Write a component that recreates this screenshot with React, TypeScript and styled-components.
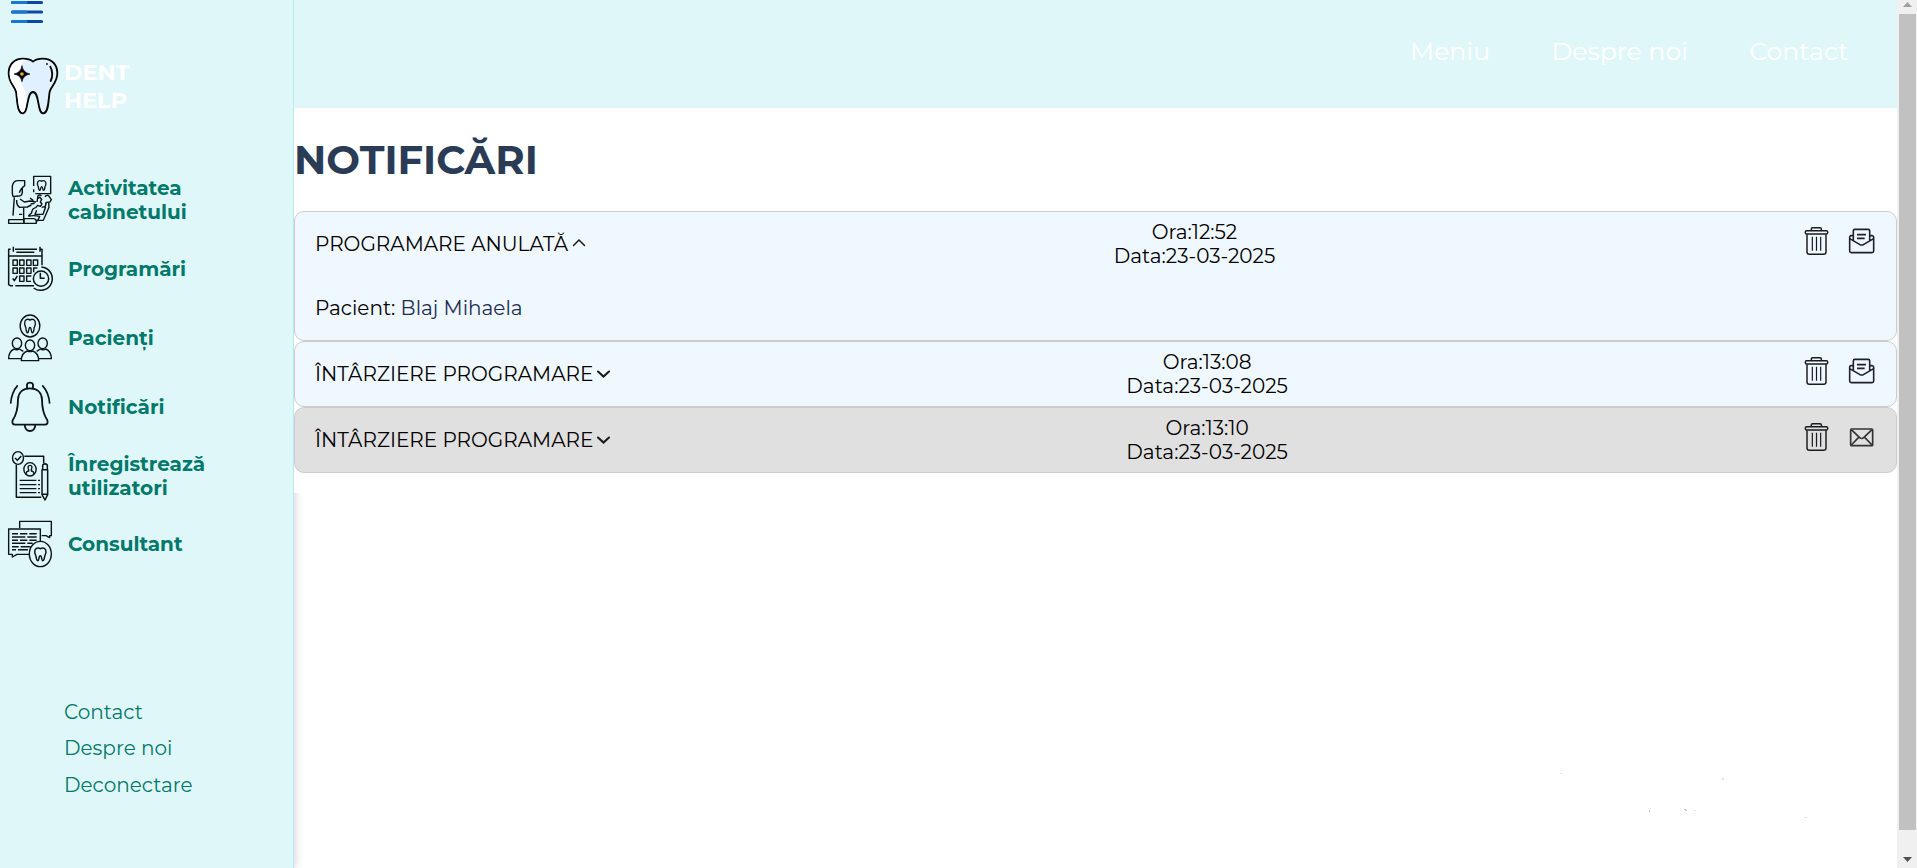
import React from "react";
import styled, { createGlobalStyle } from "styled-components";

const GlobalStyle = createGlobalStyle`
  * { box-sizing: border-box; }
  body {
    margin: 0;
    overflow: hidden;
    background: #fff;
    font-family: Montserrat, Inter, "Noto Sans", sans-serif;
    font-size: 20px;
    line-height: 24px;
    color: #000;
  }
`;

const Page = styled.div`
  display: flex;
  height: 868px;
  overflow: hidden;
`;

const Sidebar = styled.aside`
  flex: 0 0 294px;
  display: flex;
  flex-direction: column;
  background: #e0f7fa;
  border-right: 1px solid #b2ebf2;
  box-shadow: 2px 0 8px rgba(0, 0, 0, 0.15);
`;

const MenuButton = styled.button`
  width: 36px;
  height: 25px;
  margin: 0 0 0 9px;
  padding: 0;
  border: 0;
  background: none;
  svg { display: block; }
`;

const Brand = styled.div`
  display: flex;
  align-items: flex-start;
  gap: 5px;
  height: 141px;
  padding: 32px 0 0 7px;
`;

const BrandName = styled.div`
  display: flex;
  flex-direction: column;
  padding-top: 1px;
  color: #fff;
  font-size: 22.4px;
  font-weight: 700;
  line-height: 28px;
`;

const NavItem = styled.a`
  display: flex;
  align-items: center;
  gap: 16px;
  height: 68.8px;
  padding-left: 8px;
  color: #00796b;
  font-weight: 700;
  svg { flex: none; }
`;

const NavLabel = styled.span`
  width: 140px;
`;

const FooterLinks = styled.nav`
  display: flex;
  flex-direction: column;
  margin-top: 115px;
  padding-left: 64px;
`;

const FooterLink = styled.a`
  color: #00796b;
  line-height: 36.6px;
`;

const Content = styled.div`
  flex: 1;
  position: relative;
`;

const Header = styled.header`
  display: flex;
  justify-content: flex-end;
  gap: 61.3px;
  height: 108px;
  padding: 36px 48.5px 0 0;
  background: #e0f7fa;
  color: #fff;
  font-size: 25.2px;
  line-height: 30px;
`;

const Main = styled.main`
  position: relative;
  padding: 28px 0 20px;
  background: #fff;
`;

const Title = styled.h1`
  margin: 0 0 27px;
  color: #2a3b56;
  font-size: 40px;
  font-weight: 700;
  line-height: 48px;
`;

const Card = styled.article<{ $unread?: boolean }>`
  padding: 8px 20px;
  border: 1px solid #ccc;
  border-radius: 10px;
  background: ${(p) => (p.$unread ? "#e0e0e0" : "#f0f8ff")};
`;

const CardRow = styled.div`
  display: flex;
  justify-content: space-between;
  height: 48px;
`;

const CardTitle = styled.div`
  display: flex;
  align-items: center;
`;

const Timestamp = styled.div`
  display: flex;
  flex-direction: column;
  align-items: center;
`;

const Actions = styled.div`
  display: flex;
  gap: 19px;
  padding: 6px 1px 0;
`;

const CardBody = styled.div`
  padding: 28px 0 12px;
`;

const Patient = styled.span`
  color: #1c2d54;
`;

const Scrollbar = styled.div`
  flex: 0 0 20px;
  display: flex;
  flex-direction: column;
  align-items: center;
  padding-left: 1px;
  background: #f0f0f0;
`;

const Arrow = styled.svg`
  display: block;
  width: 11px;
  height: 14px;
`;

const Thumb = styled.div`
  width: 17px;
  height: 817px;
  margin-bottom: 24px;
  background: #c1c1c1;
`;

const Specks = styled.svg`
  position: absolute;
  left: 1266px;
  top: 772px;
`;

const Molar = ({ t, w = 4 }: { t: string; w?: number }) => (
  <path
    transform={t}
    strokeWidth={w}
    d="M0 -14C-8 -20-17 -14-16 -4C-16 2-12 4-12 10C-11 17-10 20-7 20C-3 20-5 6 0 6C5 6 3 20 7 20C10 20 11 17 12 10C12 4 16 2 16 -4C17 -14 8 -20 0 -14Z"
  />
);

const LineIcon = ({ top, w = 4.2, children }: { top: number; w?: number; children: React.ReactNode }) => (
  <svg width="44" height="50" viewBox={`24 ${top} 132 150`} fill="none" stroke="#0b1416" strokeWidth={w} strokeLinejoin="round" overflow="visible">
    {children}
  </svg>
);

const ClinicIcon = () => (
  <LineIcon top={45}>
    <path d="M101 78V49H152V101H106M101 88V97" />
    <Molar t="translate(125 75) scale(.8)" w={5} />
    <path d="M39 110L37 100V78Q40 62 54 62H74V77L67 83V98Q65 110 53 108L39 110M74 77Q65 82 58 98" />
    <path d="M43 112L39 167M50 120Q49 136 59 142L82 141L94 135M60 117L73 126L91 123L108 126M90 114L100 122M92 132L104 130M71 143V188M57 163H67" />
    <path d="M111 126L114 107Q120 103 124 108M112 116L119 112L125 118L121 126L126 132L121 139L113 136L108 142M135 111Q138 105 145 106L154 119L150 126L139 127L136 139L125 142M138 127L135 144M146 128L147 142L130 181H108M110 142Q96 144 95 158L85 168M110 151L105 163H129L137 141M85 169Q99 165 119 169L112 184" />
    <path d="M26 179H72V190H26ZM72 176H102Q109 177 109 185V190H72Z" />
  </LineIcon>
);

const CalendarIcon = () => (
  <LineIcon top={252} w={4.5}>
    <path d="M32 268H26V374L31 377H39M46 377H102M45 268H111M118 268H126V316M40 260V275M120 260V275M49 277H103M26 288H126" />
    <path d="M39 300H52V316H39ZM59 300H72V316H59ZM80 300H93V316H80ZM100 300H113V316H100ZM39 324H52V340H39ZM59 324H72V340H59ZM80 324H93V340H80ZM101 337V324H112M59 348H72V364H59ZM94 348H80V364H93" strokeWidth="4.200" />
    <path d="M38 355L43 362L52 348M121 338V355H134" />
    <circle cx="123" cy="356" r="23" />
    <path d="M124 321A35 35 0 1 1 101 384" />
  </LineIcon>
);

const PatientsIcon = () => (
  <LineIcon top={459}>
    <ellipse cx="90" cy="498" rx="29.5" ry="33" />
    <Molar t="translate(90 496) scale(1 1.12)" w={4} />
    <ellipse cx="51" cy="550" rx="14" ry="16" />
    <ellipse cx="128" cy="550" rx="14" ry="16" />
    <ellipse cx="90" cy="556" rx="14" ry="16" />
    <path d="M65 596H26Q26 574 43 567Q50 572 58 567L70 574M115 596H154Q154 574 137 567Q129 572 121 567L110 574" />
    <path d="M64 602Q64 579 82 573Q90 577 98 573Q116 579 116 602Z" />
  </LineIcon>
);

const BellIcon = () => (
  <LineIcon top={36} w={5.5}>
    <path d="M81 57V43Q83 38 90 38Q97 38 99 43V57M90 55C68 55 55 68 54 88C54 119 49 135 38 151Q34 163 46 164H134Q146 163 142 151C131 135 126 119 126 88C125 68 112 55 90 55ZM74 165Q76 183 90 183Q104 183 106 165" />
    <path d="M53 46Q34 68 32 101M127 46Q147 68 149 101" strokeWidth="5" />
  </LineIcon>
);

const RegisterIcon = () => (
  <LineIcon top={240}>
    <ellipse cx="54" cy="261" rx="16.5" ry="19" />
    <path d="M45 261L52 268L64 255M73 256H131V277M49 281V379H124" strokeWidth="4.500" />
    <ellipse cx="90" cy="295" rx="18.5" ry="20" />
    <path d="M78 309Q79 300 86 300V296Q81 283 90 283Q99 283 94 296V300Q101 300 102 309" />
    <path d="M59 328H109M114 328H120M59 341H109M114 341H120M59 353H109M114 353H120M59 365H109M114 365H120" />
    <path d="M128 296V282Q135 275 142 282V296M126 296H143V371L135 387L126 371ZM126 370H143" strokeWidth="4.500" />
  </LineIcon>
);

const ConsultantIcon = () => (
  <LineIcon top={447}>
    <path d="M59 474V454H154V497H149V503L138 497H125" />
    <path d="M121 516V477H26V553H37V561L51 553H87" />
    <path d="M36 491H54M60 491H82M88 491H110M36 501H76M82 501H110M36 511H54M60 511H82M88 511H110M36 520H76M82 520H98M36 530H56M62 530H92M36 539H48M54 539H84" strokeWidth="4.500" />
    <ellipse cx="121" cy="552" rx="33" ry="38" />
    <Molar t="translate(121 551) scale(1.05)" w={4.2} />
  </LineIcon>
);

const ToothLogo = () => (
  <svg width="52" height="58" viewBox="21 171 156 174" strokeLinecap="round" strokeLinejoin="round">
    <path fill="#e1f0ff" stroke="#050505" strokeWidth="5.500" d="M99 185C92 179 82 176 69 176C42 176 26 194 26 220C26 249 43 256 48 275C52 296 50 341 69 340C86 338 79 276 99 276C119 276 111 338 129 340C147 341 145 296 149 275C154 256 172 249 172 220C172 194 156 176 128 176C116 176 106 179 99 185Z" />
    <path fill="#fff" d="M68 179C45 180 29 196 29 220C29 247 46 254 51 274C55 296 54 336 69 337C76 334 80 306 79 290C79 269 58 249 57 224C56 202 66 187 79 180Z" />
    <path fill="#050505" d="M66 198Q69 218 90 222Q69 226 66 245Q63 226 42 222Q63 218 66 198Z" stroke="#050505" strokeWidth="2" />
    <circle cx="66" cy="222" r="5.5" fill="#f0a62b" />
    <path fill="none" stroke="#050505" strokeWidth="5.500" d="M151 200Q162 222 152 243M141 192V192.100" />
  </svg>
);

const TrashIcon = () => (
  <svg width="25" height="30" viewBox="102 78 75 90" fill="none" stroke="#1a1b1e" strokeWidth="4.400" strokeLinejoin="round">
    <path d="M124 91V86Q124 83 128 83H150Q154 83 154 86V91" />
    <rect x="106" y="92" width="67" height="10" rx="4" />
    <path d="M111 103V156Q111 163 118 163H161Q168 163 168 156V103" />
    <path d="M127 110V152M139.500 110V152M152 110V152" strokeWidth="3.600" />
  </svg>
);

const OpenMailIcon = () => (
  <svg width="27" height="30" viewBox="234 78 81 90" fill="none" stroke="#1f1f28" strokeWidth="4.800" strokeLinejoin="round">
    <path d="M250 121V92Q250 88 254 88H295Q299 88 299 92V121M250 107H242Q239 108 239 112V153Q239 158 244 158H306Q311 158 311 153V112Q311 108 307 107H299M239 116L270 134Q275 136 280 134L311 116M261 104H288M261 115H284" />
  </svg>
);

const MailIcon = () => (
  <svg width="27" height="30" viewBox="234 78 81 90" fill="none" stroke="#333" strokeWidth="5" strokeLinejoin="round">
    <rect x="242" y="99" width="66" height="50" rx="3" />
    <path d="M244 101L269 125Q275 130 281 125L306 101M244 147L266 124M306 147L284 124" />
  </svg>
);

const Chevron = ({ open }: { open?: boolean }) => (
  <svg width="17.8" height="14" fill="none" stroke="#1a1a1a" strokeWidth={open ? 1.5 : 2.1} strokeLinecap="round">
    <path d={open ? "M5.500 8.500L11 3L16.500 8.500" : "M5 4.500L10.500 9.500L16 4.500"} />
  </svg>
);

const navigation: { icon: React.ReactNode; label: string }[] = [
  { icon: <ClinicIcon />, label: "Activitatea cabinetului" },
  { icon: <CalendarIcon />, label: "Programări" },
  { icon: <PatientsIcon />, label: "Pacienți" },
  { icon: <BellIcon />, label: "Notificări" },
  { icon: <RegisterIcon />, label: "Înregistrează utilizatori" },
  { icon: <ConsultantIcon />, label: "Consultant" },
];

const footerLinks = ["Contact", "Despre noi", "Deconectare"];
const headerLinks = ["Meniu", "Despre noi", "Contact"];

const notifications: { title: string; time: string; date: string; patient?: string; unread?: boolean }[] = [
  { title: "PROGRAMARE ANULATĂ", time: "12:52", date: "23-03-2025", patient: "Blaj Mihaela" },
  { title: "ÎNTÂRZIERE PROGRAMARE", time: "13:08", date: "23-03-2025" },
  { title: "ÎNTÂRZIERE PROGRAMARE", time: "13:10", date: "23-03-2025", unread: true },
];

export default function App() {
  return (
    <Page>
      <GlobalStyle />
      <Sidebar>
        <MenuButton aria-label="Meniu">
          <svg width="36" height="25" strokeWidth="3.2" strokeLinecap="round">
            <path d="M3.500 2.500H32.500M3.500 12H32.500M3.500 21.500H32.500" stroke="#0d47a1" />
            <path d="M3.500 2.500H17M3.500 12H17M3.500 21.500H17" stroke="#1976d2" />
          </svg>
        </MenuButton>
        <Brand>
          <ToothLogo />
          <BrandName>
            <span>DENT</span>
            <span>HELP</span>
          </BrandName>
        </Brand>
        {navigation.map(({ icon, label }) => (
          <NavItem key={label}>
            {icon}
            <NavLabel>{label}</NavLabel>
          </NavItem>
        ))}
        <FooterLinks>
          {footerLinks.map((label) => <FooterLink key={label}>{label}</FooterLink>)}
        </FooterLinks>
      </Sidebar>
      <Content>
        <Header>
          {headerLinks.map((label) => <span key={label}>{label}</span>)}
        </Header>
        <Main>
          <Title>NOTIFICĂRI</Title>
          {notifications.map(({ title, time, date, patient, unread }) => (
            <Card key={time} $unread={unread}>
              <CardRow>
                <CardTitle>
                  <span>{title}</span>
                  <Chevron open={!!patient} />
                </CardTitle>
                <Timestamp>
                  <span>Ora:{time}</span>
                  <span>Data:{date}</span>
                </Timestamp>
                <Actions>
                  <TrashIcon />
                  {unread ? <MailIcon /> : <OpenMailIcon />}
                </Actions>
              </CardRow>
              {patient && (
                <CardBody>
                  Pacient: <Patient>{patient}</Patient>
                </CardBody>
              )}
            </Card>
          ))}
        </Main>
        <Specks width="260" height="50" fill="#c8c8c8">
          <path d="M0 1h2v1H0zM162 6h2v2h-2z" opacity=".5" />
          <path d="M89 38h1v2h-1zM124 37h2v1h-2zM125 38h2v1h-2z" />
          <path d="M134 38h2v1h-2zM244 45h3v1h-3z" opacity=".5" />
        </Specks>
      </Content>
      <Scrollbar>
        <Arrow fill="#a0a0a0"><path d="M1 7L5.500 2L10 7Z" /></Arrow>
        <Thumb />
        <Arrow fill="#505050"><path d="M1 3H10L5.500 8Z" /></Arrow>
      </Scrollbar>
    </Page>
  );
}
